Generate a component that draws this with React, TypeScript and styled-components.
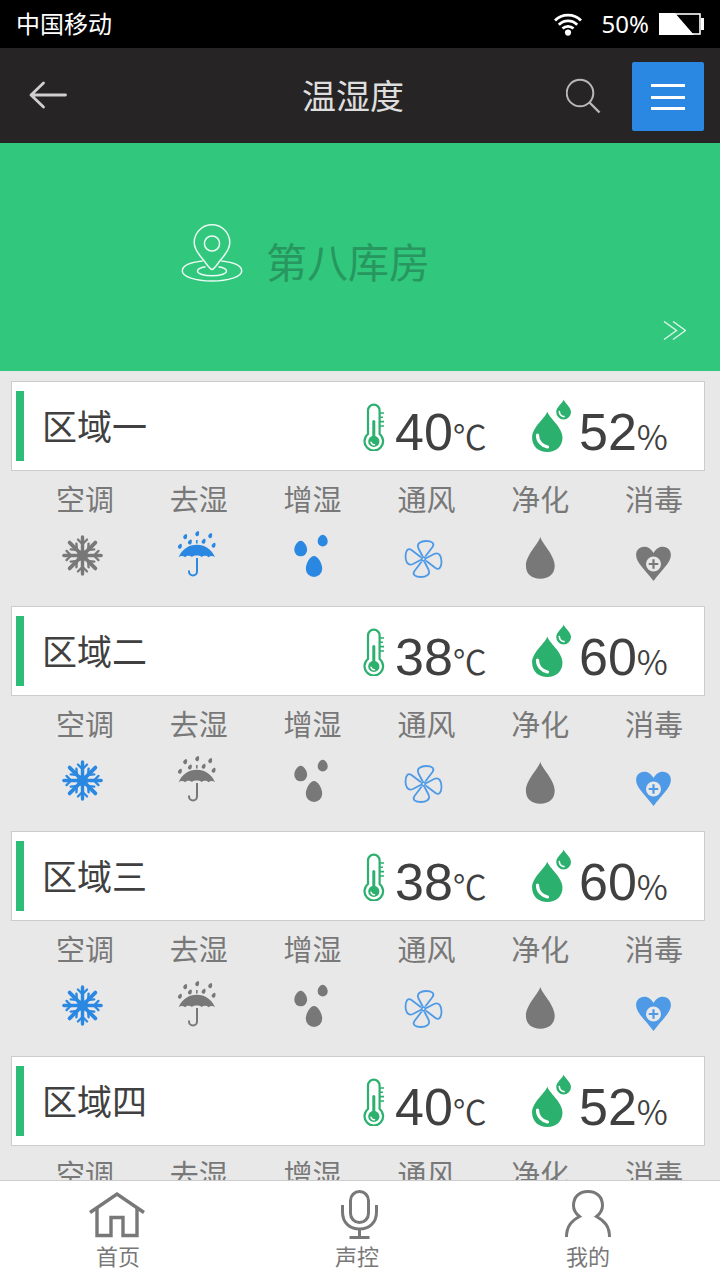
import React from 'react';
import styled, { createGlobalStyle } from 'styled-components';

const color = {
  ink: '#404040',
  muted: '#787878',
  blue: '#2a88e2',
  softBlue: '#4f9ae6',
  green: '#2cb06e',
  bar: '#2dbd78',
  hero: '#31c77c',
  heroText: '#27965f',
  page: '#e8e8e8',
  line: '#cccccc',
  header: '#272425',
};

const GlobalStyle = createGlobalStyle`
  *, *::before, *::after { box-sizing: border-box; }
  body {
    margin: 0;
    background: ${color.page};
    font-family: "Noto Sans", "Noto Sans CJK SC", sans-serif;
  }
  button { border: 0; padding: 0; background: none; font: inherit; color: inherit; cursor: pointer; }
  a { color: inherit; text-decoration: none; }
  h1, h2, p { margin: 0; font-weight: 400; }
  svg { display: block; flex: none; }
`;

const Screen = styled.div`
  display: flex;
  flex-direction: column;
  height: 100vh;
`;

const StatusBar = styled.div`
  display: flex;
  align-items: center;
  justify-content: space-between;
  flex: none;
  height: 48px;
  padding: 0 16px;
  background: #000;
  color: #fff;
  font-size: 24px;
  line-height: 48px;
`;

const Carrier = styled.span`
  font-family: "Noto Sans CJK SC", sans-serif;
  line-height: 46px;
  align-self: flex-start;
`;

const StatusIcons = styled.div`
  display: flex;
  align-items: center;
`;

const BatteryLevel = styled.span`
  margin: 0 10px 0 18px;
`;

const Header = styled.header`
  display: grid;
  grid-template-columns: 1fr auto 1fr;
  align-items: center;
  flex: none;
  height: 95px;
  padding: 0 16px 0 2px;
  background: ${color.header};
`;

const BackButton = styled.button`
  justify-self: start;
  padding: 15px 24px 17px;
`;

const Title = styled.h1`
  color: #dedede;
  font-family: "Noto Sans CJK SC", sans-serif;
  font-size: 34px;
  line-height: 48px;
  padding-bottom: 2px;
`;

const HeaderActions = styled.div`
  display: flex;
  align-items: center;
  justify-self: end;
  gap: 30px;
`;

const MenuButton = styled.button`
  display: flex;
  align-items: center;
  justify-content: center;
  width: 72px;
  height: 69px;
  margin-top: 2px;
  border-radius: 2px;
  background: ${color.blue};
`;

const Hero = styled.a`
  display: flex;
  justify-content: space-between;
  flex: none;
  height: 228px;
  padding: 79px 34px 30px 25%;
  background: ${color.hero};
`;

const Place = styled.div`
  display: flex;
  align-items: flex-end;
  align-self: flex-start;
  gap: 22px;
`;

const PlaceName = styled.h2`
  color: ${color.heroText};
  font-family: "Noto Sans CJK SC", sans-serif;
  font-size: 41px;
  line-height: 44px;
`;

const HeroMore = styled.span`
  align-self: flex-end;
`;

const ZoneList = styled.main`
  flex: 1;
  min-height: 0;
  overflow-y: auto;
  scrollbar-width: none;
  padding-top: 10px;
`;

const Zone = styled.section`
  height: 225px;
`;

const ZoneCard = styled.div`
  display: flex;
  align-items: center;
  height: 90px;
  margin: 0 15px 0 11px;
  padding-left: 4px;
  background: #fff;
  border: 1px solid ${color.line};
`;

const ZoneBar = styled.span`
  width: 8px;
  height: 70px;
  background: ${color.bar};
`;

const ZoneName = styled.h2`
  flex: 1;
  margin-left: 18px;
  padding-bottom: 2px;
  color: ${color.ink};
  font-family: "Noto Sans CJK SC", sans-serif;
  font-size: 35px;
  line-height: 44px;
`;

const Metric = styled.div<{ $width: number }>`
  display: flex;
  align-items: center;
  gap: 8px;
  width: ${(p) => p.$width}px;
`;

const Reading = styled.p`
  display: flex;
  align-items: baseline;
  padding-top: 12px;
  color: ${color.ink};
  font-family: "Liberation Sans", sans-serif;
  font-size: 52px;
  line-height: 60px;
`;

const Unit = styled.span`
  font-family: "Noto Sans CJK SC", sans-serif;
  font-size: 34px;
  font-weight: 350;
  line-height: 40px;
`;

const DeviceRow = styled.div`
  display: grid;
  grid-template-columns: repeat(6, 1fr);
  padding: 9px 9px 0 28px;
`;

const Device = styled.button<{ $tone: string }>`
  display: flex;
  flex-direction: column;
  align-items: center;
  gap: 10px;
  color: ${(p) => p.$tone};
`;

const DeviceLabel = styled.span`
  color: ${color.muted};
  font-family: "Noto Sans CJK SC", sans-serif;
  font-size: 29px;
  line-height: 36px;
`;

const TabBar = styled.nav`
  display: grid;
  grid-template-columns: 236fr 242fr 220fr;
  flex: none;
  height: 100px;
  padding: 8px 22px 0 0;
  background: #fff;
  border-top: 1px solid ${color.line};
`;

const Tab = styled.a`
  display: flex;
  flex-direction: column;
  align-items: center;
  color: ${color.muted};
  font-family: "Noto Sans CJK SC", sans-serif;
  font-size: 22px;
  line-height: 28px;
`;

const drop = (x: number, top: number, w: number, h: number) => {
  const r = w / 2;
  const wide = top + h - r;
  return `M${x} ${top}C${x + r * 0.45} ${top} ${x + r} ${wide - r * 0.7} ${x + r} ${wide}A${r} ${r} 0 0 1 ${x - r} ${wide}C${x - r} ${wide - r * 0.7} ${x - r * 0.45} ${top} ${x} ${top}Z`;
};

const Snowflake = () => (
  <svg width="60" height="60" viewBox="0 0 60 60" fill="none" stroke="currentColor" strokeLinecap="round">
    <g transform="translate(27.5 29.5)">
      <circle r="5.5" fill="currentColor" stroke="none" />
      {[0, 90, 180, 270].map((a) => (
        <g key={a} transform={`rotate(${a})`}>
          <path strokeWidth="3.4" d="M0 0V-18.600" />
          <path strokeWidth="2.200" d="M-4.600 -16L0 -11.400L4.600 -16" />
        </g>
      ))}
      {[45, 135, 225, 315].map((a) => (
        <g key={a} transform={`rotate(${a})`}>
          <path strokeWidth="3.800" d="M0 0V-18.200" />
          <path strokeWidth="2.400" d="M-4 -12.600L0 -8L4 -12.600" />
        </g>
      ))}
    </g>
  </svg>
);

const rain = [
  [16.3, 10.7],
  [28.3, 7.7],
  [41.3, 9.7],
  [11, 20.3],
  [21, 16],
  [34.7, 15.3],
  [44.7, 19.3],
];

const Umbrella = () => (
  <svg width="60" height="60" viewBox="0 0 60 60" fill="currentColor">
    <path d="M9.7 31.2C13 23 20 18.7 27.8 18.7S42.6 23 46 31.2C44 29.6 41.5 29.6 39.5 31.2C37.5 29.4 34.5 29.4 32.7 31C31.5 30 29.5 29.6 27.8 29.6S24.1 30 22.9 31C21.1 29.4 18.1 29.4 16.1 31.2C14.1 29.6 11.7 29.6 9.7 31.2Z" />
    <path d="M27.8 14V17.5" stroke="currentColor" strokeWidth="1.6" />
    <path d="M28 32V45.5A4 4 0 0 1 20 45.5V44.5" fill="none" stroke="currentColor" strokeWidth="2" />
    {rain.map(([x, y]) => (
      <path key={`${x}-${y}`} transform={`translate(${x} ${y}) rotate(25)`} d={drop(0, -2.8, 3.8, 5.2)} />
    ))}
  </svg>
);

const Droplets = () => (
  <svg width="60" height="60" viewBox="0 0 60 60" fill="currentColor">
    <path d={drop(17.7, 14.7, 12.8, 15.6)} />
    <path d={drop(39.7, 8.8, 10, 11.6)} />
    <path d={drop(31, 30, 16.4, 21)} />
  </svg>
);

const Fan = () => (
  <svg width="60" height="60" viewBox="0 0 60 60" fill="none" stroke="currentColor" strokeWidth="1.8">
    <g transform="translate(27.5 33)">
      <circle r="1.9" />
      {[0, 90, 180, 270].map((a) => (
        <path
          key={a}
          transform={`rotate(${a})`}
          d="M-0.8 -2.5L-5 -10.5C-7.5 -16 -2 -18 2.5 -18C8.5 -18 11.5 -15.5 9 -12L1.8 -2.5"
        />
      ))}
    </g>
  </svg>
);

const Purify = () => (
  <svg width="60" height="60" viewBox="0 0 60 60" fill="currentColor">
    <path d="M30.3 10.7C31.3 16.5 44.7 29 44.7 39.5C44.7 48 39 52.7 30.3 52.7S15.9 48 15.9 39.5C15.9 29 29.3 16.5 30.3 10.7Z" />
  </svg>
);

const HeartPlus = () => (
  <svg width="60" height="60" viewBox="0 0 60 60" fill="currentColor">
    <path d="M29.5 27C27 22.5 23.5 20.7 20.3 20.7C15 20.7 12.1 24.5 12.1 29C12.1 37 22 44.5 29.5 55C37 44.5 46.9 37 46.9 29C46.9 24.5 44 20.7 38.7 20.7C35.5 20.7 32 22.5 29.5 27Z" />
    <circle cx="29.5" cy="38" r="7.5" fill={color.page} />
    <path d="M29.5 33.2V42.8M24.7 38H34.3" stroke="currentColor" strokeWidth="2.2" />
  </svg>
);

const Thermometer = () => (
  <svg width="24" height="50" viewBox="0 0 24 50" fill="none" stroke={color.green} strokeWidth="2.2">
    <path d="M5 33V9.5A5.800 5.800 0 0 1 16.600 9.500V33A9.300 9.300 0 1 1 5 33Z" />
    <path d="M10.8 20.5V38" strokeWidth="3" strokeLinecap="round" />
    <circle cx="10.8" cy="40.4" r="5.6" fill={color.green} stroke="none" />
    <path d="M8 41.2A3.200 3.200 0 0 0 11.500 43.700" stroke="#fff" strokeWidth="1.5" strokeLinecap="round" />
    <path d="M17 12H21M17 16.3H20M17 20.6H21M17 25H21" strokeWidth="1.6" />
  </svg>
);

const Humidity = () => (
  <svg width="40" height="54" viewBox="0 0 40 54" fill={color.green}>
    <path d="M16.3 12.5C17.3 18 31.5 28 31.5 38.5C31.5 47.5 25 53 16.3 53S1.1 47.500 1.100 38.500C1.100 28 15.300 18 16.300 12.500Z" />
    <path d="M32.7 0.5C33.2 3.5 40 8 40 13A7.400 7.400 0 0 1 25.200 13C25.200 8 32.200 3.500 32.700 0.500Z" />
    <path d="M6.5 36C6.5 42.5 11 47 16.5 48" fill="none" stroke="#fff" strokeWidth="3.2" strokeLinecap="round" />
    <path d="M28.3 12.5C28.5 15.5 30.5 17.3 33 17.6" fill="none" stroke="#fff" strokeWidth="1.6" strokeLinecap="round" />
  </svg>
);

const devices = [
  { key: 'ac', label: '空调', Icon: Snowflake },
  { key: 'dry', label: '去湿', Icon: Umbrella },
  { key: 'wet', label: '增湿', Icon: Droplets },
  { key: 'vent', label: '通风', Icon: Fan },
  { key: 'purify', label: '净化', Icon: Purify },
  { key: 'sterilize', label: '消毒', Icon: HeartPlus },
];

const onTone: Record<string, string> = { vent: color.softBlue, sterilize: color.softBlue };

const zones = [
  { name: '区域一', temperature: 40, humidity: 52, on: ['dry', 'wet', 'vent'] },
  { name: '区域二', temperature: 38, humidity: 60, on: ['ac', 'vent', 'sterilize'] },
  { name: '区域三', temperature: 38, humidity: 60, on: ['ac', 'vent', 'sterilize'] },
  { name: '区域四', temperature: 40, humidity: 52, on: ['dry', 'wet', 'vent'] },
];

export default function App() {
  return (
    <Screen>
      <GlobalStyle />
      <StatusBar>
        <Carrier>中国移动</Carrier>
        <StatusIcons>
          <svg width="30" height="24" viewBox="0 0 30 24" fill="none" stroke="#fff" strokeWidth="2.8">
            <path d="M1 8.5C8 1.2 20 1.2 27 8.5" />
            <path d="M4.8 12.7C10 7.6 18 7.6 23.2 12.7" />
            <path d="M8.5 16.5C11.6 13.6 16.4 13.6 19.5 16.5" />
            <circle cx="14" cy="20.6" r="3.1" fill="#fff" stroke="none" />
          </svg>
          <BatteryLevel>50%</BatteryLevel>
          <svg width="45" height="22" viewBox="0 0 45 22">
            <rect x="1" y="1" width="40" height="20" fill="none" stroke="#fff" strokeWidth="1.6" />
            <path d="M0 0H16L35 22H0Z" fill="#fff" />
            <rect x="42" y="5" width="3" height="12" fill="#fff" />
          </svg>
        </StatusIcons>
      </StatusBar>

      <Header>
        <BackButton aria-label="返回">
          <svg width="44" height="30" viewBox="0 0 44 30" fill="none" stroke="#cfcfcf" strokeWidth="2.8" strokeLinecap="round" strokeLinejoin="round">
            <path d="M39.5 15H5M17.5 3L5 15L17.5 27" />
          </svg>
        </BackButton>
        <Title>温湿度</Title>
        <HeaderActions>
          <button aria-label="搜索">
            <svg width="36" height="36" viewBox="0 0 36 36" fill="none" stroke="#b9b7b8" strokeWidth="2">
              <circle cx="14" cy="15" r="13.3" />
              <path d="M23.5 24.5L33.5 34.5" strokeWidth="2.4" />
            </svg>
          </button>
          <MenuButton aria-label="菜单">
            <svg width="34" height="28" viewBox="0 0 34 28" fill="#fff">
              <path d="M0 1H34V4H0ZM0 13H34V16H0ZM0 24H34V27H0Z" />
            </svg>
          </MenuButton>
        </HeaderActions>
      </Header>

      <Hero href="#room">
        <Place>
          <svg width="64" height="60" viewBox="0 0 64 60" fill="none" stroke="#e9fbf2" strokeWidth="1.5">
            <path d="M32 47.5C29.5 47.5 27 42 21 35C16.5 29.5 14.2 25.5 14.2 20.5A17.800 17.800 0 0 1 49.800 20.500C49.800 25.500 47.500 29.500 43 35C37 42 34.500 47.500 32 47.500Z" />
            <circle cx="32" cy="21.5" r="7.6" />
            <path d="M22.8 39C10 40.3 2.3 44 2.3 49C2.3 54.7 15.500 59 32 59S61.700 54.700 61.700 49C61.700 44 54 40.300 41.200 39" />
            <path d="M25.5 44.7C20.5 45.5 17.5 47 17.5 49C17.5 51.7 24 53.800 32 53.800S46.500 51.700 46.500 49C46.500 47 43.500 45.500 38.500 44.700" />
          </svg>
          <PlaceName>第八库房</PlaceName>
        </Place>
        <HeroMore>
          <svg width="24" height="20" viewBox="0 0 24 20" fill="none" stroke="#d6f5e5" strokeWidth="1.5">
            <path d="M2 0.5L14.5 9.5L2 18.5M11 0.5L23.5 9.5L11 18.5" />
          </svg>
        </HeroMore>
      </Hero>

      <ZoneList>
        {zones.map((zone) => (
          <Zone key={zone.name}>
            <ZoneCard>
              <ZoneBar />
              <ZoneName>{zone.name}</ZoneName>
              <Metric $width={168}>
                <Thermometer />
                <Reading>
                  {zone.temperature}
                  <Unit>℃</Unit>
                </Reading>
              </Metric>
              <Metric $width={173}>
                <Humidity />
                <Reading>
                  {zone.humidity}
                  <Unit>%</Unit>
                </Reading>
              </Metric>
            </ZoneCard>
            <DeviceRow>
              {devices.map(({ key, label, Icon }) => {
                const on = zone.on.includes(key);
                return (
                  <Device key={key} aria-pressed={on} $tone={on ? onTone[key] ?? color.blue : color.muted}>
                    <DeviceLabel>{label}</DeviceLabel>
                    <Icon />
                  </Device>
                );
              })}
            </DeviceRow>
          </Zone>
        ))}
      </ZoneList>

      <TabBar>
        <Tab href="#home">
          <svg width="60" height="52" viewBox="0 0 60 52" fill="none" stroke="currentColor" strokeWidth="3.4">
            <path d="M2 23.5L29 5L56 23.5" />
            <path d="M9 19V46.5H23V28.5H35V46.5H49V19" />
          </svg>
          首页
        </Tab>
        <Tab href="#voice">
          <svg width="60" height="52" viewBox="0 0 60 52" fill="none" stroke="currentColor" strokeWidth="3">
            <rect x="23.5" y="2.5" width="18" height="31" rx="9" />
            <path d="M15.5 16V23C15.5 34 23 40 32.5 40S49.5 34 49.5 23V16M32.5 40V48M22.5 48.5H42.5" />
          </svg>
          声控
        </Tab>
        <Tab href="#mine">
          <svg width="60" height="52" viewBox="0 0 60 52" fill="none" stroke="currentColor" strokeWidth="3">
            <path d="M8.5 48C8.5 37 13.5 32 21.5 27.5C17 24 15.5 20 15.5 16.5C15.5 8 21 2.5 30 2.5S44.5 8 44.5 16.5C44.5 20 43 24 38.5 27.5C46.500 32 51.500 37 51.500 48" />
          </svg>
          我的
        </Tab>
      </TabBar>
    </Screen>
  );
}
